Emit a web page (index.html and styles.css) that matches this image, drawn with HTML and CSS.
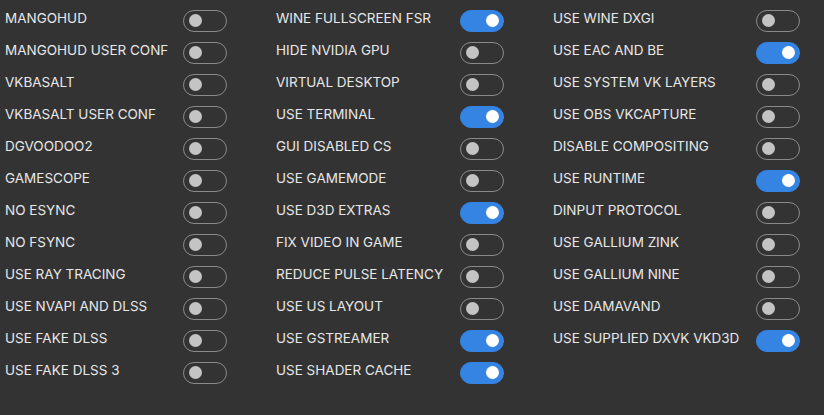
FILE: index.html
```html
<!DOCTYPE html>
<html>
<head>
<meta charset="utf-8">
<link rel="stylesheet" href="styles.css">
</head>
<body>
<div class="grid">
  <div class="col c1">
    <div class="row"><span class="label">MANGOHUD</span><span class="toggle"></span></div>
    <div class="row"><span class="label">MANGOHUD USER CONF</span><span class="toggle"></span></div>
    <div class="row"><span class="label">VKBASALT</span><span class="toggle"></span></div>
    <div class="row"><span class="label">VKBASALT USER CONF</span><span class="toggle"></span></div>
    <div class="row"><span class="label">DGVOODOO2</span><span class="toggle"></span></div>
    <div class="row"><span class="label">GAMESCOPE</span><span class="toggle"></span></div>
    <div class="row"><span class="label">NO ESYNC</span><span class="toggle"></span></div>
    <div class="row"><span class="label">NO FSYNC</span><span class="toggle"></span></div>
    <div class="row"><span class="label">USE RAY TRACING</span><span class="toggle"></span></div>
    <div class="row"><span class="label">USE NVAPI AND DLSS</span><span class="toggle"></span></div>
    <div class="row"><span class="label">USE FAKE DLSS</span><span class="toggle"></span></div>
    <div class="row"><span class="label">USE FAKE DLSS 3</span><span class="toggle"></span></div>
  </div>
  <div class="col c2">
    <div class="row"><span class="label">WINE FULLSCREEN FSR</span><span class="toggle on"></span></div>
    <div class="row"><span class="label">HIDE NVIDIA GPU</span><span class="toggle"></span></div>
    <div class="row"><span class="label">VIRTUAL DESKTOP</span><span class="toggle"></span></div>
    <div class="row"><span class="label">USE TERMINAL</span><span class="toggle on"></span></div>
    <div class="row"><span class="label">GUI DISABLED CS</span><span class="toggle"></span></div>
    <div class="row"><span class="label">USE GAMEMODE</span><span class="toggle"></span></div>
    <div class="row"><span class="label">USE D3D EXTRAS</span><span class="toggle on"></span></div>
    <div class="row"><span class="label">FIX VIDEO IN GAME</span><span class="toggle"></span></div>
    <div class="row"><span class="label">REDUCE PULSE LATENCY</span><span class="toggle"></span></div>
    <div class="row"><span class="label">USE US LAYOUT</span><span class="toggle"></span></div>
    <div class="row"><span class="label">USE GSTREAMER</span><span class="toggle on"></span></div>
    <div class="row"><span class="label">USE SHADER CACHE</span><span class="toggle on"></span></div>
  </div>
  <div class="col c3">
    <div class="row"><span class="label">USE WINE DXGI</span><span class="toggle"></span></div>
    <div class="row"><span class="label">USE EAC AND BE</span><span class="toggle on"></span></div>
    <div class="row"><span class="label">USE SYSTEM VK LAYERS</span><span class="toggle"></span></div>
    <div class="row"><span class="label">USE OBS VKCAPTURE</span><span class="toggle"></span></div>
    <div class="row"><span class="label">DISABLE COMPOSITING</span><span class="toggle"></span></div>
    <div class="row"><span class="label">USE RUNTIME</span><span class="toggle on"></span></div>
    <div class="row"><span class="label">DINPUT PROTOCOL</span><span class="toggle"></span></div>
    <div class="row"><span class="label">USE GALLIUM ZINK</span><span class="toggle"></span></div>
    <div class="row"><span class="label">USE GALLIUM NINE</span><span class="toggle"></span></div>
    <div class="row"><span class="label">USE DAMAVAND</span><span class="toggle"></span></div>
    <div class="row"><span class="label">USE SUPPLIED DXVK VKD3D</span><span class="toggle on"></span></div>
  </div>
</div>
</body>
</html>
```
FILE: styles.css
```css
html, body {
  margin: 0;
  padding: 0;
  background: #333333;
  width: 824px;
  height: 415px;
  overflow: hidden;
}
body {
  font-family: Inter, "Noto Sans", sans-serif;
  font-size: 13.5px;
  color: #e8e8e8;
}
.grid {
  display: flex;
  padding: 10px 0 0 5px;
}
.col {
  display: flex;
  flex-direction: column;
  gap: 10px;
}
.c1 { width: 271px; }
.c2 { width: 277px; }
.c3 { width: 250px; }
.row {
  display: flex;
  align-items: center;
  height: 22px;
}
.c1 .label { width: 178px; }
.c2 .label { width: 184px; }
.c3 .label { width: 203px; }
.label {
  flex: none;
  line-height: 16px;
  margin-top: -6px;
  white-space: nowrap;
}
.toggle {
  flex: none;
  box-sizing: border-box;
  width: 44px;
  height: 22px;
  border-radius: 11px;
  border: 1.5px solid #8a8a8a;
  position: relative;
}
.toggle::after {
  content: "";
  position: absolute;
  width: 13px;
  height: 13px;
  border-radius: 50%;
  background: #c4c4c4;
  left: 4.5px;
  top: 3px;
}
.toggle.on {
  background: #3584e4;
  border-color: #3584e4;
}
.toggle.on::after {
  background: #ffffff;
  left: auto;
  right: 4.5px;
}
```
